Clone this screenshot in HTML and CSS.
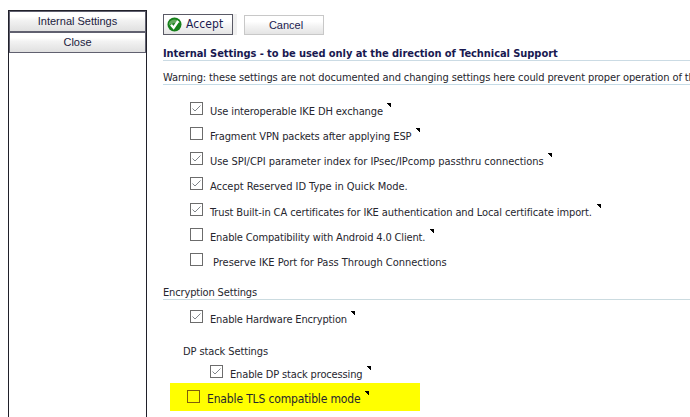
FILE: index.html
```
<!DOCTYPE html>
<html lang="en">
<head>
    <meta charset="UTF-8">
    <title>Internal Settings</title>
    <link rel="stylesheet" href="styles.css">
</head>
<body>
    <svg class="defs" width="0" height="0">
        <symbol id="tick" viewBox="0 0 11 11"><path d="M1.5 5.5 4 8 9.5 2.5" fill="none" stroke="currentColor"/></symbol>
        <symbol id="tip" viewBox="0 0 4 4"><path d="M0 0H4V4H3V3H2V2H1V1H0Z"/></symbol>
    </svg>

    <div class="menu">
        <div class="menu-item">Internal Settings</div>
        <div class="menu-item close">Close</div>
    </div>

    <div class="content">
        <div class="buttons">
            <div class="btn accept">
                <svg class="ok" viewBox="0 0 15 15">
                    <circle cx="7.5" cy="7.5" r="7" fill="#16801b"/>
                    <path d="M2 6A6 6 0 0 1 13 6Q8 5 2 8Z" fill="#62a95e"/>
                    <path d="M4 7.8 6.6 10.8 11.2 4" fill="none" stroke="#fff" stroke-width="2.4"/>
                </svg>
                <span>Accept</span>
            </div>
            <div class="btn cancel">Cancel</div>
        </div>

        <div class="title"><span>Internal Settings - to be used only at the direction of Technical Support</span></div>
        <div class="warning"><span>Warning: these settings are not documented and changing settings here could prevent proper operation of the</span></div>

        <div class="options">
            <div class="row"><span class="box"><svg><use href="#tick"/></svg></span><label class="w1">Use interoperable IKE DH exchange</label><svg class="tip"><use href="#tip"/></svg></div>
            <div class="row"><span class="box"></span><label class="w2">Fragment VPN packets after applying ESP</label><svg class="tip"><use href="#tip"/></svg></div>
            <div class="row"><span class="box"><svg><use href="#tick"/></svg></span><label class="w3">Use SPI/CPI parameter index for IPsec/IPcomp passthru connections</label><svg class="tip"><use href="#tip"/></svg></div>
            <div class="row tall"><span class="box"><svg><use href="#tick"/></svg></span><label class="w4">Accept Reserved ID Type in Quick Mode.</label></div>
            <div class="row"><span class="box"><svg><use href="#tick"/></svg></span><label class="w5">Trust Built-in CA certificates for IKE authentication and Local certificate import.</label><svg class="tip"><use href="#tip"/></svg></div>
            <div class="row"><span class="box"></span><label class="w6">Enable Compatibility with Android 4.0 Client.</label><svg class="tip"><use href="#tip"/></svg></div>
            <div class="row"><span class="box"></span><label class="w7">Preserve IKE Port for Pass Through Connections</label></div>
        </div>

        <div class="section">Encryption Settings</div>
        <div class="row hardware"><span class="box"><svg><use href="#tick"/></svg></span><label class="w8">Enable Hardware Encryption</label><svg class="tip"><use href="#tip"/></svg></div>
        <div class="subsection">DP stack Settings</div>
        <div class="row dp"><span class="box"><svg><use href="#tick"/></svg></span><label class="w9">Enable DP stack processing</label><svg class="tip"><use href="#tip"/></svg></div>
        <div class="row highlight"><span class="box"></span><label class="w10">Enable TLS compatible mode</label><svg class="tip"><use href="#tip"/></svg></div>
    </div>
</body>
</html>
```
FILE: styles.css
```
body {
    margin: 0;
    height: 417px;
    display: flex;
    overflow: hidden;
    background: #fff;
    color: #26262e;
    font: 11px/13px "DejaVu Sans Condensed", Tahoma, sans-serif;
    font-stretch: condensed;
    white-space: nowrap;
}
.defs { display: none; }
.menu {
    box-sizing: border-box;
    width: 139px;
    height: 407px;
    margin: 10px 0 0 8px;
    flex: none;
    border: 1px solid #20202a;
    border-bottom: none;
    font: 11px/19px "Liberation Sans", Arial, sans-serif;
    text-align: center;
    color: #1b1b40;
}
.menu-item {
    box-sizing: border-box;
    height: 21px;
    border: 1px solid #60606f;
    background: linear-gradient(#fff 25%, #f2f2f2 45%, #e0e0e0);
}
.content { width: 527px; margin-left: 16px; flex: none; }
.buttons { display: flex; padding-top: 14px; height: 21px; }
.btn {
    box-sizing: border-box;
    display: flex;
    align-items: center;
    background: linear-gradient(#fff 30%, #f4f4f4 55%, #e4e4e4);
    color: #1b1b50;
}
.accept {
    width: 70px;
    height: 21px;
    padding-left: 3px;
    border: 1px solid #5a5a66;
    box-shadow: 4px 0 0 #f0f0f0;
    font-size: 12px;
    letter-spacing: .1px;
}
.ok { width: 15px; height: 15px; margin-right: 4px; flex: none; }
.cancel {
    width: 80px;
    height: 20px;
    margin: 1px 0 0 11px;
    justify-content: center;
    padding-left: 4px;
    border: 1px solid #c8c8c8;
    font: 11px "Liberation Sans", Arial, sans-serif;
}
.title {
    height: 14px;
    padding-top: 11px;
    border-bottom: 1px solid #cbdbe4;
    font-weight: bold;
    color: #191950;
    line-height: 15px;
    letter-spacing: -.06px;
}
.warning {
    height: 13px;
    padding-top: 10px;
    border-bottom: 1px solid #c5dbe6;
    letter-spacing: -.11px;
}
.options { padding: 17px 0 0 27px; }
.row { display: flex; height: 25px; }
.tall { height: 26px; }
.box {
    box-sizing: border-box;
    width: 13px;
    height: 13px;
    flex: none;
    border: 1px solid #6c6c6c;
    background: #fff;
    color: #80858a;
}
.box svg { display: block; width: 11px; height: 11px; }
.row label { margin: 3px 0 0 7px; flex: none; }
/* label widths keep the tip markers in place */
.w1 { width: 173px; letter-spacing: -.1px; }
.w2 { width: 202px; letter-spacing: -.11px; }
.w3 { width: 334px; letter-spacing: -.03px; }
.w4 { letter-spacing: -.03px; }
.w5 { width: 383px; letter-spacing: -.1px; }
.w6 { width: 216px; letter-spacing: -.15px; }
.row .w7 { margin-left: 10px; letter-spacing: -.02px; }
.w8 { width: 137px; letter-spacing: -.15px; }
.w9 { width: 133px; letter-spacing: -.15px; }
.w10 { width: 154px; letter-spacing: -.15px; }
.tip { width: 4px; height: 4px; margin: 1px 0 0 4px; flex: none; }
.section {
    height: 13px;
    padding-top: 8px;
    border-bottom: 1px solid #cbdbe0;
    letter-spacing: -.15px;
}
.hardware { padding: 10px 0 0 27px; }
.subsection {
    padding-top: 10px;
    margin-left: 20px;
    letter-spacing: -.1px;
}
.dp { height: 18px; padding: 7px 0 0 47px; }
.highlight {
    box-sizing: border-box;
    width: 250px;
    height: 28px;
    margin-left: 7px;
    padding: 7px 0 0 17px;
    background: #ff0;
    font-size: 12px;
}
.highlight .box { background: #ff0; border-color: #80600a; }
```
